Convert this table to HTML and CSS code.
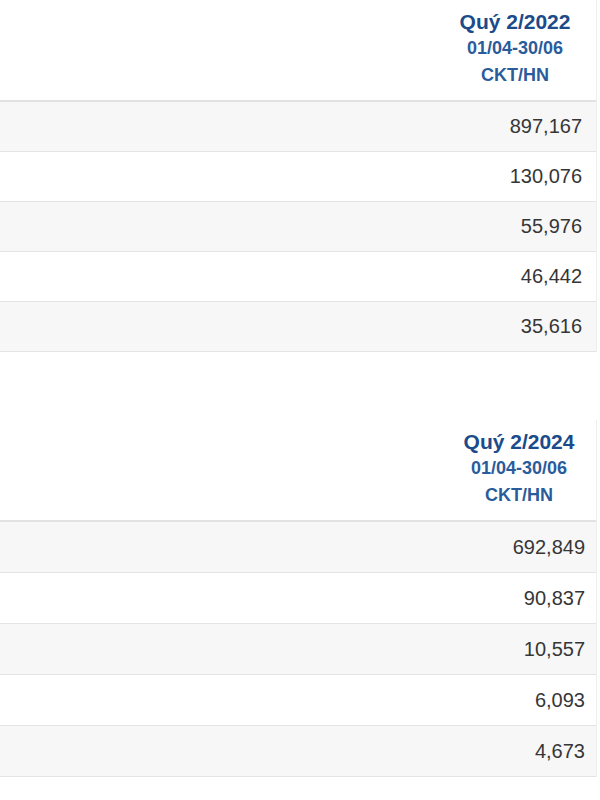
FILE: index.html
```html
<!DOCTYPE html>
<html>
<head>
<meta charset="utf-8">
<link rel="stylesheet" href="styles.css">
</head>
<body>
<div class="page">
  <section class="block first">
    <div class="head">
      <div class="col-head">
        <div class="title">Quý 2/2022</div>
        <div class="sub">01/04-30/06</div>
        <div class="sub">CKT/HN</div>
      </div>
    </div>
    <div class="row odd"><span class="val">897,167</span></div>
    <div class="row"><span class="val">130,076</span></div>
    <div class="row odd"><span class="val">55,976</span></div>
    <div class="row"><span class="val">46,442</span></div>
    <div class="row odd"><span class="val">35,616</span></div>
  </section>
  <section class="block second">
    <div class="head">
      <div class="col-head">
        <div class="title">Quý 2/2024</div>
        <div class="sub">01/04-30/06</div>
        <div class="sub">CKT/HN</div>
      </div>
    </div>
    <div class="row odd"><span class="val">692,849</span></div>
    <div class="row"><span class="val">90,837</span></div>
    <div class="row odd"><span class="val">10,557</span></div>
    <div class="row"><span class="val">6,093</span></div>
    <div class="row odd"><span class="val">4,673</span></div>
  </section>
</div>
</body>
</html>
```
FILE: styles.css
```css
html, body {
  margin: 0;
  padding: 0;
  background: #ffffff;
}
.page {
  font-family: "Liberation Sans", Arial, sans-serif;
  width: 600px;
}
.block {
  border-right: 1px solid #eeeeee;
  width: 596px;
}
.second {
  margin-top: 68px;
}
.head {
  display: flex;
  justify-content: flex-end;
  border-bottom: 2px solid #e2e2e2;
  box-sizing: border-box;
  height: 102px;
}
.col-head {
  width: 150px;
  margin-right: 6px;
  text-align: center;
  padding-top: 9px;
}
.second .col-head {
  margin-right: 2px;
}
.title {
  font-size: 21px;
  font-weight: bold;
  color: #1b4b8a;
  line-height: 26px;
}
.sub {
  font-size: 18px;
  font-weight: bold;
  color: #2a5c9b;
  line-height: 27px;
}
.row {
  height: 49px;
  border-bottom: 1px solid #e4e4e4;
  display: flex;
  align-items: center;
  justify-content: flex-end;
  padding-right: 14px;
}
.second .row {
  height: 50px;
  padding-right: 11px;
}
.row.odd {
  background: #f7f7f7;
}
.val {
  font-size: 20px;
  color: #363636;
}
```
